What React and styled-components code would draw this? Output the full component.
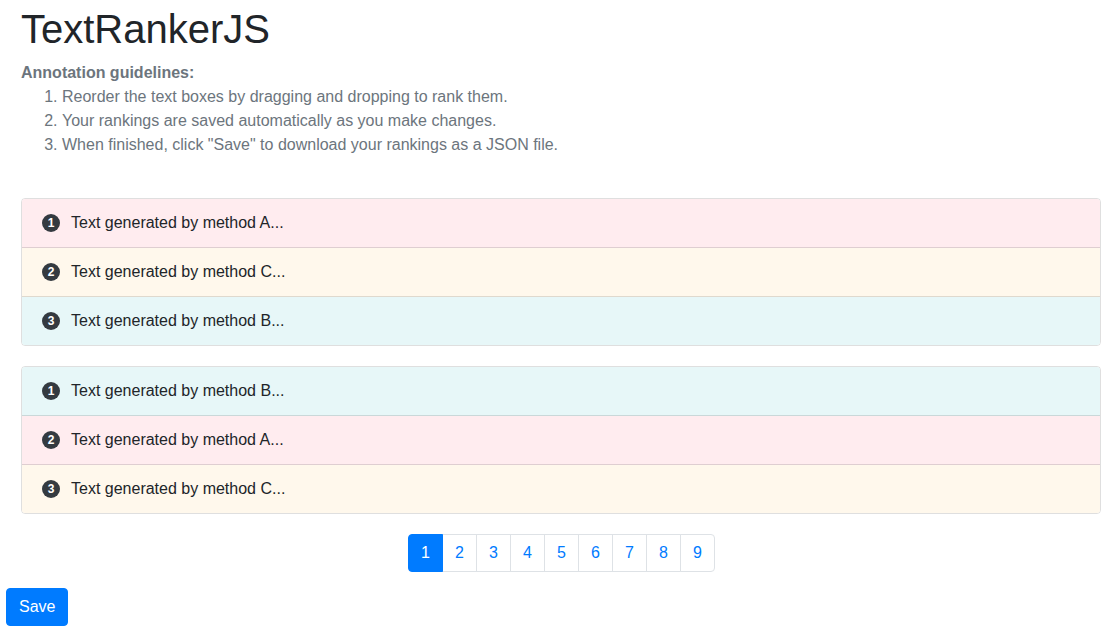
import styled, { createGlobalStyle } from "styled-components";

const GlobalStyle = createGlobalStyle`
    body {
        margin: 0;
        background: #fff;
        font-family: "Liberation Sans", Arial, Helvetica, sans-serif;
        font-size: 16px;
        line-height: 1.5;
        color: #212529;
    }
    * { box-sizing: border-box; }
`;

const Page = styled.div`
    padding: 5px 8px 0 21px;
`;
const Title = styled.h1`
    margin: 0 0 8px;
    font-size: 40px;
    font-weight: 400;
    line-height: 1.2;
`;
const Guidelines = styled.div`
    color: #6c757d;
    margin-bottom: 41px;
`;
const GuideHead = styled.div`
    font-weight: 700;
`;
const GuideList = styled.ol`
    margin: 0;
    padding-left: 41px;
`;
const ListGroup = styled.div`
    display: flex;
    flex-direction: column;
    border: 1px solid rgba(0, 0, 0, 0.125);
    border-radius: 4px;
    overflow: hidden;
    margin-bottom: 20px;
`;
const bg = { A: "#ffecef", B: "#e7f7f8", C: "#fff8ec" };
const Item = styled.div`
    display: flex;
    align-items: center;
    height: ${({ $last }) => ($last ? "48px" : "49px")};
    padding: 0 20px;
    background: ${({ $method }) => bg[$method]};
    border-bottom: ${({ $last }) => ($last ? "none" : "1px solid rgba(0,0,0,0.125)")};
`;
const Badge = styled.span`
    display: inline-flex;
    align-items: center;
    justify-content: center;
    width: 18px;
    height: 18px;
    border-radius: 50%;
    background: #343a40;
    color: #fff;
    font-size: 12px;
    font-weight: 700;
    margin-right: 11px;
    line-height: 1;
`;
const Pager = styled.div`
    display: flex;
    justify-content: center;
    padding-left: 1px;
`;
const PageLink = styled.span`
    display: block;
    width: 35px;
    height: 38px;
    text-align: center;
    line-height: 36px;
    margin-left: -1px;
    border: 1px solid ${({ $active }) => ($active ? "#007bff" : "#dee2e6")};
    background: ${({ $active }) => ($active ? "#007bff" : "#fff")};
    color: ${({ $active }) => ($active ? "#fff" : "#007bff")};
    position: relative;
    z-index: ${({ $active }) => ($active ? 1 : 0)};
    &:first-child {
        margin-left: 0;
        border-radius: 4px 0 0 4px;
    }
    &:last-child {
        border-radius: 0 4px 4px 0;
    }
`;
const SaveButton = styled.button`
    display: block;
    margin: 16px 0 0 6px;
    height: 38px;
    padding: 0 12px;
    border: 1px solid #007bff;
    border-radius: 4px;
    background: #007bff;
    color: #fff;
    font-family: inherit;
    font-size: 16px;
`;

const groups = [
    ["A", "C", "B"],
    ["B", "A", "C"],
];

export default function App() {
    return (
        <>
            <GlobalStyle />
            <Page>
                <Title>TextRankerJS</Title>
                <Guidelines>
                    <GuideHead>Annotation guidelines:</GuideHead>
                    <GuideList>
                        <li>Reorder the text boxes by dragging and dropping to rank them.</li>
                        <li>Your rankings are saved automatically as you make changes.</li>
                        <li>When finished, click "Save" to download your rankings as a JSON file.</li>
                    </GuideList>
                </Guidelines>
                {groups.map((g, gi) => (
                    <ListGroup key={gi}>
                        {g.map((m, i) => (
                            <Item key={m} $method={m} $last={i === g.length - 1}>
                                <Badge>{i + 1}</Badge>
                                Text generated by method {m}...
                            </Item>
                        ))}
                    </ListGroup>
                ))}
                <Pager>
                    {[1, 2, 3, 4, 5, 6, 7, 8, 9].map((n) => (
                        <PageLink key={n} $active={n === 1}>
                            {n}
                        </PageLink>
                    ))}
                </Pager>
            </Page>
            <SaveButton>Save</SaveButton>
        </>
    );
}
